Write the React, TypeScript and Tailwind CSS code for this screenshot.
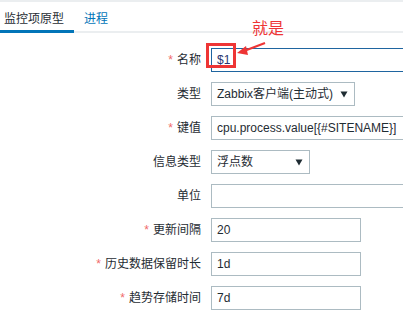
import React from "react";

const font = { fontFamily: '"Liberation Sans", "Noto Sans CJK SC", sans-serif' };

function Arrow() {
  return (
    <svg width="8" height="7" viewBox="0 0 8 7" className="shrink-0">
      <path d="M0.5 0.5 L7.5 0.5 L4 6.5 Z" fill="#1f2c33" />
    </svg>
  );
}

function Row({ label, req, children }: { label: string; req?: boolean; children: React.ReactNode }) {
  return (
    <div className="flex items-center gap-[10px] h-[24px]">
      <div className="w-[201px] shrink-0 text-right text-[12px] text-[#1f2c33] whitespace-nowrap">
        {req && <span className="text-[#f06a6a] mr-[4px]">*</span>}
        {label}
      </div>
      {children}
    </div>
  );
}

function Box({ w, children, blue }: { w: string; children?: React.ReactNode; blue?: boolean }) {
  return (
    <div
      className={`${w} h-[24px] shrink-0 flex items-center pl-[5px] pr-[6px] border text-[12px] text-[#1f2c33] whitespace-nowrap ${
        blue ? "border-[#1f65a0]" : "border-[#acbbc2]"
      }`}
    >
      {children}
    </div>
  );
}

export default function App() {
  return (
    <div className="relative w-[403px] h-[317px] overflow-hidden bg-white" style={font}>
      <div className="h-[2px] bg-[#ebeef0]" />
      <div className="flex h-[31px] border-b-2 border-[#ebeef0] text-[12px]">
        <div className="w-[74px] pl-[4px] pt-[8px] text-[#1f2c33] border-b-[3px] border-[#0275b8] -mb-[2px]">
          监控项原型
        </div>
        <div className="pl-[10px] pt-[8px] text-[#0275b8]">进程</div>
      </div>

      <div className="flex flex-col gap-[10px] pt-[15px]">
        <Row label="名称" req>
          <Box w="w-[300px]" blue>
            <span className="text-[#2a3570]">$1</span>
          </Box>
        </Row>
        <Row label="类型">
          <div className="w-[144px] min-w-[144px] h-[24px] shrink-0 grid grid-cols-[1fr_8px] items-center pl-[5px] pr-[6px] border border-[#acbbc2] text-[12px] text-[#1f2c33] whitespace-nowrap">
            <span>Zabbix客户端(主动式)</span>
            <Arrow />
          </div>
        </Row>
        <Row label="键值" req>
          <Box w="w-[300px]">cpu.process.value[{"{"}#SITENAME{"}"}]</Box>
        </Row>
        <Row label="信息类型">
          <div className="w-[99px] h-[24px] shrink-0 grid grid-cols-[1fr_8px] items-center pl-[5px] pr-[6px] border border-[#acbbc2] text-[12px] text-[#1f2c33] whitespace-nowrap">
            <span>浮点数</span>
            <Arrow />
          </div>
        </Row>
        <Row label="单位">
          <Box w="w-[300px]" />
        </Row>
        <Row label="更新间隔" req>
          <Box w="w-[150px]">20</Box>
        </Row>
        <Row label="历史数据保留时长" req>
          <Box w="w-[150px]">1d</Box>
        </Row>
        <Row label="趋势存储时间" req>
          <Box w="w-[150px]">7d</Box>
        </Row>
      </div>

      {/* annotation overlay */}
      <div className="absolute left-[206px] top-[43px] w-[30px] h-[25px] border-[3px] border-[#ee3535]" />
      <div className="absolute left-[252px] top-[19px] text-[16px] leading-[20px] text-[#ee3535]">就是</div>
      <svg className="absolute left-[234px] top-[40px]" width="34" height="20" viewBox="0 0 34 20">
        <path d="M31 3 L10 11" stroke="#ee3535" strokeWidth="2" />
        <path d="M3 13 L12 6 L14 15 Z" fill="#ee3535" />
      </svg>
    </div>
  );
}
